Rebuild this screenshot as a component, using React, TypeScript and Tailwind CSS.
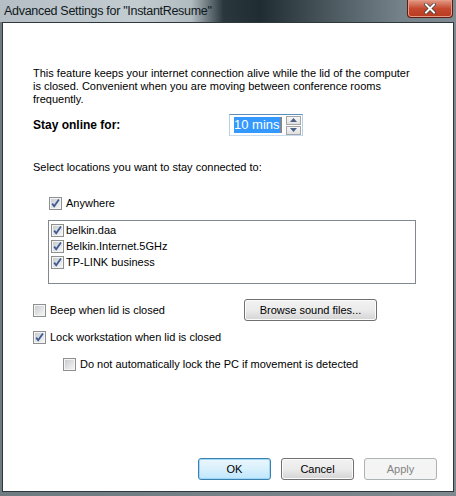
import React, { useState } from "react";

const font = "font-['Liberation_Sans',Arial,sans-serif]";

const CheckBox: React.FC<{ checked: boolean; onClick?: () => void }> = ({ checked, onClick }) => (
  <svg width="13" height="13" viewBox="0 0 13 13" onClick={onClick} className="shrink-0">
    <defs>
      <linearGradient id="cbInner" x1="0" y1="0" x2="1" y2="1">
        <stop offset="0" stopColor="#c9ccd1" />
        <stop offset="1" stopColor="#f4f4f4" />
      </linearGradient>
    </defs>
    <rect x="0.5" y="0.5" width="12" height="12" fill="#f4f4f4" stroke="#8e8f8f" />
    <rect x="2" y="2" width="9" height="9" fill="url(#cbInner)" />
    {checked && (
      <path d="M3.2 6.6 L5.2 9.3 L9.9 2.6" fill="none" stroke="#3d5a92" strokeWidth="1.8" />
    )}
  </svg>
);

const Check: React.FC<{ label: string; checked: boolean; onToggle: () => void }> = ({ label, checked, onToggle }) => (
  <label className="flex items-center h-[16px] gap-[4px] cursor-default select-none" onClick={onToggle}>
    <CheckBox checked={checked} />
    <span>{label}</span>
  </label>
);

const WinButton: React.FC<{
  children: React.ReactNode;
  variant?: "default" | "primary" | "disabled";
  className?: string;
}> = ({ children, variant = "default", className = "" }) => {
  const styles =
    variant === "primary"
      ? "text-black border-[#3c7fb1] bg-gradient-to-b from-[#eaf6fd] via-[#d9f0fc] to-[#bee6fd] shadow-[inset_0_0_0_1px_#9fd8f5]"
      : variant === "disabled"
        ? "text-[#838383] border-[#adb2b5] bg-[#f4f4f4]"
        : "text-black border-[#707070] bg-gradient-to-b from-[#f2f2f2] via-[#ebebeb] to-[#d4d4d4] shadow-[inset_0_0_0_1px_#fcfcfc]";
  return <button className={`h-[22px] rounded-[3px] border text-[11px] ${styles} ${className}`}>{children}</button>;
};

export default function App() {
  const [anywhere, setAnywhere] = useState(true);
  const [nets, setNets] = useState({ a: true, b: true, c: true });
  const [beep, setBeep] = useState(false);
  const [lock, setLock] = useState(true);
  const [noLock, setNoLock] = useState(false);

  return (
    <div className={`w-[456px] h-[496px] flex flex-col ${font} bg-[linear-gradient(to_right,#6e7b81_0%,#7d898e_100%)]`}>
      {/* title bar */}
      <div className="h-[22px] relative flex items-center bg-[linear-gradient(to_right,#b4bec4_0%,#c3ccd1_30%,#b0bbc0_42%,#2a383e_49%,#1f2c32_57%,#4a585e_72%,#75828a_88%,#7e8a90_100%)]">
        <span className="pl-[4px] pt-[1px] text-[12.5px] tracking-[-0.3px] text-[#101820]">
          Advanced Settings for "InstantResume"
        </span>
        <div className="absolute right-[3px] top-0 w-[46px] h-[18px] rounded-b-[4px] border border-t-0 border-[#5c1e14] bg-gradient-to-b from-[#e09a86] via-[#c5492f] to-[#b83a1e] flex items-center justify-center shadow-[inset_0_0_0_1px_#e69a88]">
          <svg width="12" height="11" viewBox="0 0 12 11">
            <path d="M2 1.5 L10 9.5 M10 1.5 L2 9.5" stroke="#3a3a3a" strokeWidth="3.4" strokeLinecap="square" />
            <path d="M2 1.5 L10 9.5 M10 1.5 L2 9.5" stroke="#ffffff" strokeWidth="2" strokeLinecap="square" />
          </svg>
        </div>
      </div>

      {/* client area */}
      <div className="flex-1 mx-[2px] mb-[4px] border border-[#2d373c] bg-white flex flex-col text-[11px] text-black leading-[13px] pl-[30px] pr-[16px] pt-[44px] pb-[11px]">
        <p className="w-[380px]">
          This feature keeps your internet connection alive while the lid of the computer is closed. Convenient when you
          are moving between conference rooms frequently.
        </p>

        <div className="flex items-center mt-[8px] h-[22px]">
          <span className="w-[196px] font-bold text-[12px]">Stay online for:</span>
          <div className="flex w-[74px] h-[22px] border border-[#5a8ebb] border-l-[#b5cfe7] border-b-[#c7dcef] border-r-[#b5cfe7] bg-white items-center">
            <div className="flex-1 flex items-center pl-[4px]">
              <span className="bg-[#3399ff] text-white h-[16px] leading-[16px] pr-[1px] text-[13px]">10 mins</span>
              <span className="w-[1px] h-[16px] bg-[#c8742a]" />
            </div>
            <div className="flex flex-col gap-[1px] mr-[1px]">
              {["up", "down"].map((d) => (
                <div
                  key={d}
                  className="w-[15px] h-[9px] border border-[#a5a5a5] bg-gradient-to-b from-[#f6f6f6] to-[#e0e0e0] flex items-center justify-center"
                >
                  <svg width="7" height="4" viewBox="0 0 7 4">
                    <path d={d === "up" ? "M0 4 L3.5 0 L7 4 Z" : "M0 0 L3.5 4 L7 0 Z"} fill="#4d6185" />
                  </svg>
                </div>
              ))}
            </div>
          </div>
        </div>

        <p className="mt-[25px]">Select locations you want to stay connected to:</p>

        <div className="ml-[16px] mt-[21px]">
          <Check label="Anywhere" checked={anywhere} onToggle={() => setAnywhere(!anywhere)} />
        </div>

        <div className="ml-[15px] mt-[9px] w-[368px] h-[64px] border border-[#828790] pl-[2px] pt-[1px] flex flex-col">
          {(
            [
              ["a", "belkin.daa"],
              ["b", "Belkin.Internet.5GHz"],
              ["c", "TP-LINK business"],
            ] as const
          ).map(([k, name]) => (
            <div
              key={k}
              className="h-[16px] flex items-center gap-[2px]"
              onClick={() => setNets({ ...nets, [k]: !nets[k] })}
            >
              <CheckBox checked={nets[k]} />
              <span>{name}</span>
            </div>
          ))}
        </div>

        <div className="flex items-center mt-[15px] h-[22px]">
          <div className="w-[211px]">
            <Check label="Beep when lid is closed" checked={beep} onToggle={() => setBeep(!beep)} />
          </div>
          <WinButton className="w-[133px]">Browse sound files...</WinButton>
        </div>

        <div className="mt-[8px]">
          <Check label="Lock workstation when lid is closed" checked={lock} onToggle={() => setLock(!lock)} />
        </div>

        <div className="mt-[11px] ml-[30px]">
          <Check
            label="Do not automatically lock the PC if movement is detected"
            checked={noLock}
            onToggle={() => setNoLock(!noLock)}
          />
        </div>

        <div className="mt-auto flex justify-end gap-[10px]">
          <WinButton variant="primary" className="w-[73px]">
            OK
          </WinButton>
          <WinButton className="w-[73px]">Cancel</WinButton>
          <WinButton variant="disabled" className="w-[73px]">
            Apply
          </WinButton>
        </div>
      </div>
    </div>
  );
}
